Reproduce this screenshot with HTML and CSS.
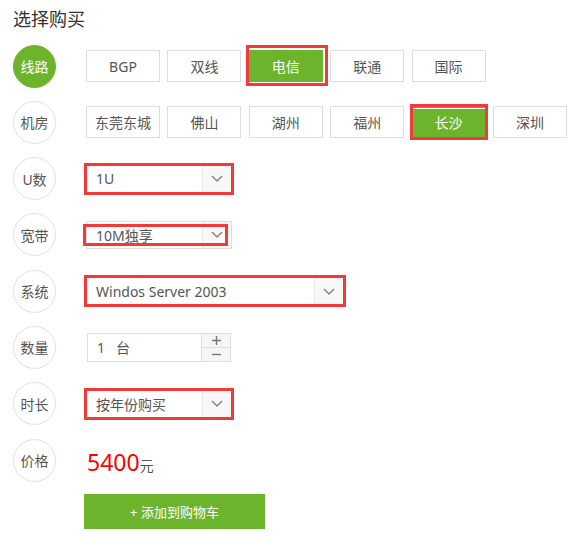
FILE: index.html
```html
<!DOCTYPE html>
<html lang="zh-CN">
<head>
    <meta charset="UTF-8">
    <meta name="viewport" content="width=device-width, initial-scale=1.0">
    <title>选择购买</title>
    <link rel="stylesheet" href="styles.css">
</head>
<body>
    <h2 class="title">选择购买</h2>
    <div class="buy-form">
        <div class="row">
            <span class="label active">线路</span>
            <div class="opts">
                <span class="opt">BGP</span>
                <span class="opt">双线</span>
                <span class="opt on mark mark-dx">电信</span>
                <span class="opt">联通</span>
                <span class="opt">国际</span>
            </div>
        </div>
        <div class="row">
            <span class="label">机房</span>
            <div class="opts">
                <span class="opt">东莞东城</span>
                <span class="opt">佛山</span>
                <span class="opt">湖州</span>
                <span class="opt">福州</span>
                <span class="opt on line mark">长沙</span>
                <span class="opt">深圳</span>
            </div>
        </div>
        <div class="row">
            <span class="label">U数</span>
            <div class="select mark">
                <span class="select-text">1U</span>
                <span class="select-arrow"><svg width="12" height="7" viewBox="0 0 12 7"><path d="M1 1l5 5 5-5" fill="none" stroke="#888" stroke-width="1.5"/></svg></span>
            </div>
        </div>
        <div class="row">
            <span class="label">宽带</span>
            <div class="select mark mark-kd">
                <span class="select-text">10M独享</span>
                <span class="select-arrow"><svg width="12" height="7" viewBox="0 0 12 7"><path d="M1 1l5 5 5-5" fill="none" stroke="#888" stroke-width="1.5"/></svg></span>
            </div>
        </div>
        <div class="row">
            <span class="label">系统</span>
            <div class="select wide mark">
                <span class="select-text">Windos Server 2003</span>
                <span class="select-arrow"><svg width="12" height="7" viewBox="0 0 12 7"><path d="M1 1l5 5 5-5" fill="none" stroke="#888" stroke-width="1.5"/></svg></span>
            </div>
        </div>
        <div class="row">
            <span class="label">数量</span>
            <div class="number">
                <span class="number-text">1<span class="unit">台</span></span>
                <span class="spin">
                    <span class="spin-btn"><svg width="9" height="9" viewBox="0 0 9 9"><path d="M0 4.5h9M4.5 0v9" stroke="#777" stroke-width="1.4"/></svg></span>
                    <span class="spin-btn"><svg width="9" height="9" viewBox="0 0 9 9"><path d="M0 4.5h9" stroke="#777" stroke-width="1.4"/></svg></span>
                </span>
            </div>
        </div>
        <div class="row">
            <span class="label">时长</span>
            <div class="select mark">
                <span class="select-text">按年份购买</span>
                <span class="select-arrow"><svg width="12" height="7" viewBox="0 0 12 7"><path d="M1 1l5 5 5-5" fill="none" stroke="#888" stroke-width="1.5"/></svg></span>
            </div>
        </div>
        <div class="row">
            <span class="label">价格</span>
            <div class="price"><span class="price-num">5400</span><span class="price-unit">元</span></div>
        </div>
        <button class="cart-btn">+ 添加到购物车</button>
    </div>
</body>
</html>
```

FILE: styles.css
```css
body {
    margin: 0;
    padding: 7px 13px;
    font-family: "Noto Sans", "Noto Sans CJK SC", sans-serif;
    color: #555;
    background: #fff;
}
.title {
    margin: 0;
    font-size: 18px;
    line-height: 24px;
    font-weight: normal;
    color: #333;
}
.buy-form {
    display: flex;
    flex-direction: column;
    gap: 13.3px;
    margin-top: 13.5px;
}
.row {
    display: flex;
    align-items: center;
    gap: 30px;
    height: 43px;
}
.label {
    flex: none;
    width: 41px;
    height: 41px;
    border: 1px solid #e0e0e0;
    border-radius: 50%;
    display: flex;
    align-items: center;
    justify-content: center;
    font-size: 14px;
    color: #555;
}
.label.active {
    background: #6cb42c;
    border-color: #6cb42c;
    color: #fff;
}
.opts {
    display: flex;
    gap: 7.4px;
}
.opt {
    box-sizing: border-box;
    width: 74px;
    height: 32px;
    border: 1px solid #ddd;
    display: flex;
    align-items: center;
    justify-content: center;
    font-size: 14px;
    color: #555;
}
.opt.on {
    background: #6cb42c;
    border-color: #6cb42c;
    color: #fff;
}
.opt.line {
    box-shadow: inset 0 1px 0 #6cb42c, inset 0 2px 0 #fff;
}
/* rode aanduiding */
.mark {
    position: relative;
}
.mark::after {
    content: "";
    position: absolute;
    top: -3px;
    right: -3px;
    bottom: -3px;
    left: -3px;
    border: 3px solid #f23a3a;
    pointer-events: none;
}
.mark-dx::after {
    top: -6px;
    right: -6px;
    bottom: -5px;
    left: -4px;
}
.mark-kd::after {
    top: 2px;
    right: 3px;
    bottom: 2px;
    left: -4px;
}
.select {
    box-sizing: border-box;
    width: 146px;
    height: 28px;
    border: 1px solid #ddd;
    display: flex;
    align-items: stretch;
}
.select.wide {
    width: 258px;
}
.select-text {
    flex: 1;
    display: flex;
    align-items: center;
    padding-left: 9px;
    font-size: 14px;
    color: #555;
}
.select-arrow {
    width: 28px;
    display: flex;
    align-items: center;
    justify-content: center;
    background: #f7f7f7;
    border-left: 1px solid #e6e6e6;
}
.number {
    display: flex;
    height: 29px;
    margin-left: 1px;
}
.number-text {
    box-sizing: border-box;
    width: 115px;
    border: 1px solid #ddd;
    display: flex;
    align-items: center;
    padding-left: 9px;
    font-size: 14px;
    color: #555;
}
.unit {
    margin-left: 11px;
}
.spin {
    box-sizing: border-box;
    width: 29px;
    display: flex;
    flex-direction: column;
    border: 1px solid #ddd;
    border-left: none;
    background: #f5f5f5;
}
.spin-btn {
    flex: 1;
    display: flex;
    align-items: center;
    justify-content: center;
}
.spin-btn + .spin-btn {
    border-top: 1px solid #ddd;
}
.price {
    display: flex;
    align-items: baseline;
    margin-left: 1px;
    padding-top: 4px;
}
.price-num {
    font-size: 23px;
    color: #f00;
}
.price-unit {
    font-size: 14px;
    color: #555;
}
.cart-btn {
    align-self: flex-start;
    margin-left: 71px;
    margin-top: -1px;
    width: 181px;
    height: 35px;
    border: none;
    background: #6cb42c;
    color: #fff;
    font-family: inherit;
    font-size: 13px;
    cursor: pointer;
}
```
